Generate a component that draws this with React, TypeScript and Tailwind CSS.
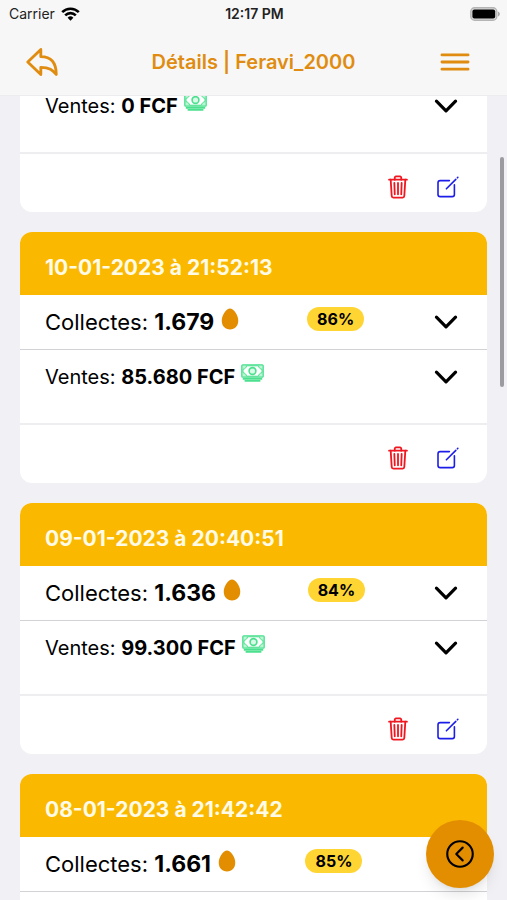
import React from 'react';
import {
    IoArrowUndoOutline,
    IoChevronBackCircleOutline,
    IoChevronDown,
    IoEgg,
    IoMenuOutline,
    IoTrashOutline,
} from 'react-icons/io5';

interface DayRecord {
    date?: string;
    eggs?: string;
    rate?: string;
    sales?: string;
}

const records: DayRecord[] = [
    { sales: '0' },
    { date: '10-01-2023 à 21:52:13', eggs: '1.679', rate: '86%', sales: '85.680' },
    { date: '09-01-2023 à 20:40:51', eggs: '1.636', rate: '84%', sales: '99.300' },
    { date: '08-01-2023 à 21:42:42', eggs: '1.661', rate: '85%' },
];

const StatusBar: React.FC = () => (
    <div className="grid grid-cols-3 items-center h-7 pl-[9px] pr-[7px] text-sm leading-5 text-[#222]">
        <div className="flex items-center gap-1.5">
            <span>Carrier</span>
            <svg width="19" height="14" viewBox="0 0 19 14" fill="none" stroke="#000" strokeWidth="2.6">
                <path d="M1.2 5.2a11.8 11.8 0 0 1 16.6 0" />
                <path d="M4.2 8.3a7.5 7.5 0 0 1 10.6 0" />
                <path d="M9.5 13.8 6.6 10.8a4.1 4.1 0 0 1 5.8 0z" fill="#000" stroke="none" />
            </svg>
        </div>
        <span className="text-center font-semibold">12:17 PM</span>
        <svg className="justify-self-end" width="30" height="14" viewBox="0 0 30 14">
            <rect x="0.8" y="0.8" width="26" height="12.4" rx="3.8" fill="#dcdcdc" stroke="#b4b4b4" strokeWidth="1.4" />
            <rect x="2.4" y="2.4" width="22.8" height="9.2" rx="2" fill="#000" />
            <path d="M28 4.6c1.1.4 1.8 1.3 1.8 2.4S29.1 9 28 9.4z" fill="#a9a9a9" />
        </svg>
    </div>
);

const CashIcon: React.FC = () => (
    <svg width="23" height="18" viewBox="0 0 23 18" fill="none" stroke="#4be08e" className="mb-2">
        <rect x="0.8" y="0.8" width="21.4" height="12.4" rx="1" fill="#b9f5d3" strokeWidth="1.3" />
        <path d="M5.6 1.8h11.8c.4 2 1.7 3.2 3.6 3.6v3.2c-1.9.4-3.2 1.6-3.6 3.6H5.6C5.2 10.2 3.9 9 2 8.6V5.4c1.9-.4 3.2-1.6 3.6-3.6z" fill="#fff" strokeWidth="1" />
        <circle cx="11.5" cy="7" r="3.4" fill="#d8fae6" strokeWidth="1.6" />
        <path d="M1.8 14.9h19.4" strokeWidth="1.7" />
        <path d="M3.6 16.9h15.8" strokeWidth="1.7" />
    </svg>
);

const EditIcon: React.FC = () => (
    <svg width="22" height="22" viewBox="0 0 22 22" fill="none" stroke="currentColor" strokeWidth="1.6" strokeLinecap="round">
        <path d="M12.4 4.600H3.200A2.200 2.200 0 0 0 1 6.800v11.6a2.200 2.200 0 0 0 2.200 2.200h12a2.200 2.200 0 0 0 2.200-2.200V8.800" />
        <path d="M9.400 12.800 18.800 3.400" />
        <path d="M20.400 1.800l.4-.4" />
    </svg>
);

const ExpandButton: React.FC<{ label: string }> = ({ label }) => (
    <button aria-label={label} className="text-black">
        <IoChevronDown size={34} />
    </button>
);

const RecordCard: React.FC<{ record: DayRecord }> = ({ record }) => (
    <article className="shrink-0 rounded-xl overflow-hidden bg-white">
        {record.date && (
            <h2 className="h-[63px] pl-[25px] pt-2 flex items-center bg-[#fbb800] text-[21px] font-bold text-[#fffbe6]">
                {record.date}
            </h2>
        )}

        {record.eggs && (
            <div className="flex items-center justify-between h-[55px] pl-[25px] pr-6 border-b border-[#d2d2d6]">
                <p className="flex items-center gap-1 text-[22px]">
                    <span>Collectes: <b className="text-[23px]">{record.eggs}</b></span>
                    <IoEgg size={24} className="text-[#e38d00] mb-1.5" />
                </p>
                <span className="mb-1.5 h-6 w-[57px] rounded-full bg-[#ffd534] text-center text-base leading-6 font-bold">
                    {record.rate}
                </span>
                <ExpandButton label="Collectes" />
            </div>
        )}

        {record.sales && (
            <div className="flex items-start justify-between h-[75px] pl-[25px] pr-6 pt-2.5 border-b-2 border-[#eeeef0]">
                <p className="flex items-center gap-1.5 h-[34px] text-xl leading-none">
                    <span>Ventes: <b>{record.sales} FCF</b></span>
                    <CashIcon />
                </p>
                <ExpandButton label="Ventes" />
            </div>
        )}

        <div className="flex items-center justify-end gap-[26px] h-[58px] pr-7 pt-2">
            <button aria-label="Supprimer" className="text-[#f01820]">
                <IoTrashOutline size={26} className="[&_path]:stroke-[36]" />
            </button>
            <button aria-label="Modifier" className="text-[#1c1ce8]">
                <EditIcon />
            </button>
        </div>
    </article>
);

const App: React.FC = () => {
    return (
        <div className="relative flex flex-col h-dvh overflow-hidden bg-[#f0f0f5] text-black font-['Inter','Liberation_Sans',sans-serif]">
            <header className="shrink-0 bg-[#f7f7f7] border-b border-[#ececee] text-[#e08c10]">
                <StatusBar />
                <div className="flex items-center justify-between h-[67px] pl-[23px] pr-[33px]">
                    <button aria-label="Retour">
                        <IoArrowUndoOutline size={38} className="[&_path]:stroke-[38]" />
                    </button>
                    <h1 className="pl-2.5 text-xl font-semibold">Détails | Feravi_2000</h1>
                    <button aria-label="Menu">
                        <IoMenuOutline size={38} className="[&_path]:stroke-[38]" />
                    </button>
                </div>
            </header>

            <main className="flex-1 min-h-0 overflow-hidden">
                <div className="flex flex-col gap-5 px-5 -mt-[17px]">
                    {records.map((record, i) => (
                        <RecordCard key={i} record={record} />
                    ))}
                </div>
            </main>

            {/* Scroll indicator */}
            <div className="absolute right-[3px] top-[157px] w-1 h-[230px] rounded-full bg-[#9c9ca0]"></div>

            <button
                aria-label="Précédent"
                className="absolute z-10 right-[13px] bottom-3 size-[68px] rounded-full bg-[#e38d00] flex items-center justify-center shadow-lg shadow-black/10">
                <IoChevronBackCircleOutline size={34} />
            </button>
        </div>
    );
};

export default App;
